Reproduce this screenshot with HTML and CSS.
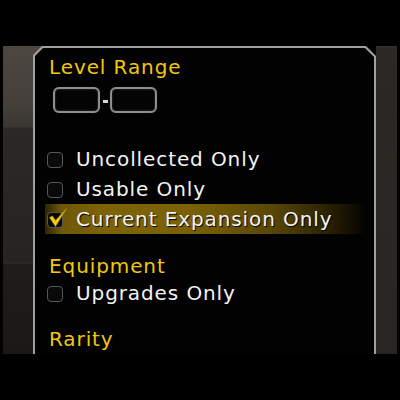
FILE: index.html
```html
<!DOCTYPE html>
<html>
<head>
<meta charset="utf-8">
<link rel="stylesheet" href="styles.css">
</head>
<body>
<div class="scene">
  <div class="strip-left"></div>
  <div class="frame">
    <div class="panel">
      <div class="heading first">Level Range</div>
      <div class="range">
        <div class="box"></div>
        <div class="dash"></div>
        <div class="box"></div>
      </div>
      <div class="options">
        <div class="row"><span class="check"></span><span class="label">Uncollected Only</span></div>
        <div class="row"><span class="check"></span><span class="label">Usable Only</span></div>
        <div class="row selected"><span class="check">
          <svg class="tick" width="22" height="22" viewBox="0 0 22 22"><path d="M2.5 11.5 L5.5 10 L8.5 14.5 L19.5 2.5 L8.5 20.5 Z" fill="#f6cb12" stroke="#b38a00" stroke-width="0.7" stroke-linejoin="round"/></svg>
        </span><span class="label">Current Expansion Only</span></div>
      </div>
      <div class="heading equip">Equipment</div>
      <div class="row"><span class="check"></span><span class="label">Upgrades Only</span></div>
      <div class="heading rarity">Rarity</div>
    </div>
  </div>
  <div class="strip-right"></div>
</div>
</body>
</html>
```
FILE: styles.css
```css
html, body {
  margin: 0;
  padding: 0;
  background: #000;
}
body {
  width: 400px;
  height: 400px;
  overflow: hidden;
  font-family: "DejaVu Sans", sans-serif;
}
.scene {
  margin: 46px 3px 0 3px;
  height: 308px;
  display: flex;
  overflow: hidden;
  background: #000;
}
.strip-left {
  width: 39px;
  flex: none;
  background: linear-gradient(#4c4741 0, #443f39 60px, #3a3631 81px, #2b2926 82px, #262422 216px, #33302c 217px, #1e1d1b 218px, #1a1918 100%);
}
.frame {
  flex: none;
  width: 343px;
  margin-left: -9px;
  padding: 2px 2px 0 2px;
  box-sizing: border-box;
  background: #a0a0a0;
  clip-path: polygon(9px 0, calc(100% - 10px) 0, 100% 10px, 100% 100%, 0 100%, 0 9px);
}
.panel {
  height: 100%;
  box-sizing: border-box;
  background: #020202;
  padding: 7px 0 0 14px;
  clip-path: polygon(8px 0, calc(100% - 9px) 0, 100% 9px, 100% 100%, 0 100%, 0 8px);
}
.strip-right {
  flex: none;
  width: 21px;
  background: linear-gradient(#3a3630 0, #2c2925 2px, #282522 100%);
}
.heading {
  color: #f4c70f;
  font-size: 20px;
  line-height: 24px;
  height: 24px;
  letter-spacing: 0.9px;
  white-space: nowrap;
  text-shadow: 1px 1px 1px #000;
}
.equip { margin-top: 20px; }
.rarity { margin-top: 19px; }
.range {
  display: flex;
  align-items: center;
  margin: 8px 0 0 4px;
}
.box {
  width: 47px;
  height: 26px;
  box-sizing: border-box;
  border: 2px solid #8e8e8e;
  border-radius: 6px;
  background: #040404;
  box-shadow: inset 0 0 2px #555, 0 0 1px #333;
}
.dash {
  width: 5px;
  height: 3px;
  background: #d8d8d8;
  margin: 2px 2px 0 3px;
}
.options { margin-top: 31px; }
.row {
  display: flex;
  align-items: center;
  height: 30px;
  white-space: nowrap;
}
.check {
  position: relative;
  flex: none;
  width: 16px;
  height: 16px;
  box-sizing: border-box;
  margin: 2px 0 0 -2px;
  border: 1.5px solid #575757;
  border-radius: 4px;
  background: #0a0a0a;
}
.tick {
  position: absolute;
  left: -1px;
  top: -7px;
}
.label {
  margin-left: 13px;
  color: #f3f3f3;
  font-size: 20px;
  line-height: 30px;
  letter-spacing: 0.9px;
  text-shadow: 1px 1px 1px #000;
}
.selected {
  margin-left: -4px;
  padding-left: 4px;
  width: 318px;
  background: linear-gradient(to right, #2e2400 0, #6e5706 5%, #7d6308 18%, #7a6108 45%, #5a4706 70%, #2a2103 88%, rgba(0,0,0,0) 100%);
}
```
